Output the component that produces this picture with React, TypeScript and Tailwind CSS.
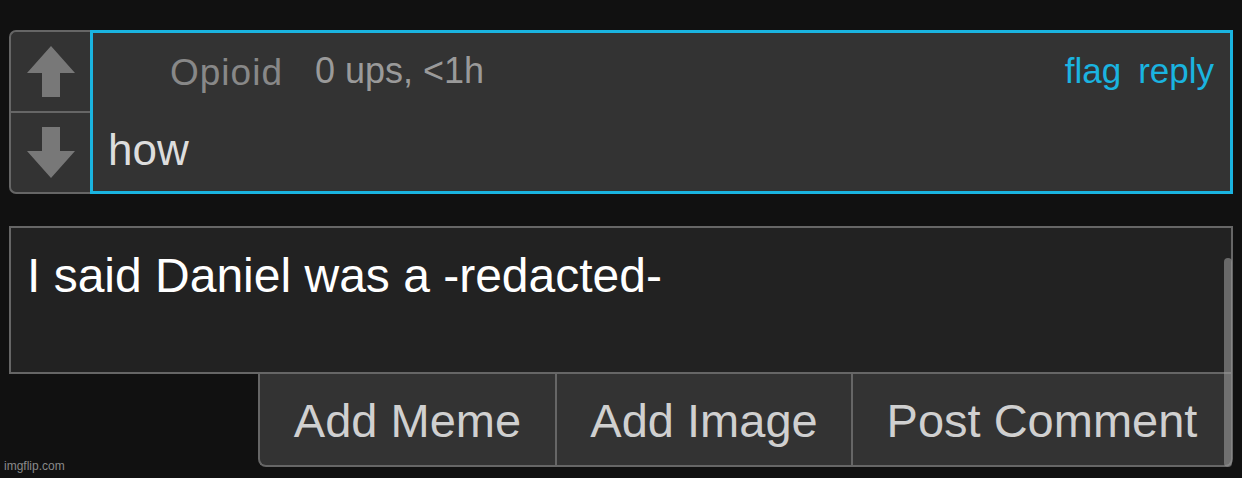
import React from 'react';

const font = { fontFamily: '"Liberation Sans", Arial, sans-serif' };

const Arrow = ({ down }: { down?: boolean }) => (
  <svg width="48" height="51" viewBox="0 0 48 51" className={down ? 'rotate-180' : ''}>
    <path d="M24 0 L48 27 L33 27 L33 51 L15 51 L15 27 L0 27 Z" fill="#787878" />
  </svg>
);

const Comment = () => (
  <div className="flex h-[164px] w-[1224px]">
    <div className="flex w-[81px] flex-col rounded-l-[7px] border-y-2 border-l-2 border-[#666] bg-[#333]">
      <div className="flex flex-1 items-center justify-center border-b-2 border-[#666]">
        <Arrow />
      </div>
      <div className="flex flex-1 items-center justify-center">
        <Arrow down />
      </div>
    </div>
    <div className="flex-1 border-[3px] border-[#1ab4e0] bg-[#333] pl-[15px] pr-[16px]">
      <div className="mt-[18px] flex items-baseline leading-[40px]">
        <span className="relative top-[2px] ml-[62px] text-[37px] tracking-[1px] text-[#888]">Opioid</span>
        <span className="ml-[32px] text-[36px] text-[#9a9a9a]">0 ups, &lt;1h</span>
        <span className="ml-auto text-[35px] text-[#1ab4e0]">flag</span>
        <span className="ml-[17px] text-[35px] text-[#1ab4e0]">reply</span>
      </div>
      <p className="mt-[34px] text-[44px] leading-[50px] text-[#ddd]">how</p>
    </div>
  </div>
);

export default function App() {
  const buttons = [
    { label: 'Add Meme', w: 'w-[297px] rounded-bl-[8px]' },
    { label: 'Add Image', w: 'w-[296px]' },
    { label: 'Post Comment', w: 'w-[382px] border-r-2 rounded-br-[8px]' },
  ];

  return (
    <div style={font} className="relative h-[478px] w-[1242px] overflow-hidden bg-[#111]">
      <div className="pl-[9px] pt-[30px]">
        <Comment />

        <textarea
          readOnly
          value="I said Daniel was a -redacted-"
          style={font}
          className="mt-[32px] block h-[148px] w-[1224px] resize-none border-2 border-[#666] bg-[#222] px-[16px] pt-[20px] text-[48px] leading-[55px] text-white outline-none"
        />

        <div className="flex w-[1224px] justify-end">
          {buttons.map((b) => (
            <button
              key={b.label}
              style={font}
              className={`flex h-[93px] items-center justify-center border-b-2 border-l-2 border-[#666] bg-[#333] pt-[3px] text-[47px] text-[#d0d0d0] ${b.w}`}
            >
              {b.label}
            </button>
          ))}
        </div>
      </div>

      {/* textarea scrollbar overlay */}
      <div className="absolute left-[1224px] top-[258px] h-[209px] w-[8px] rounded-full bg-[#9a9a9a]/60" />

      <span className="absolute bottom-[3px] left-[4px] text-[12px] text-[#8a8a8a]">imgflip.com</span>
    </div>
  );
}
